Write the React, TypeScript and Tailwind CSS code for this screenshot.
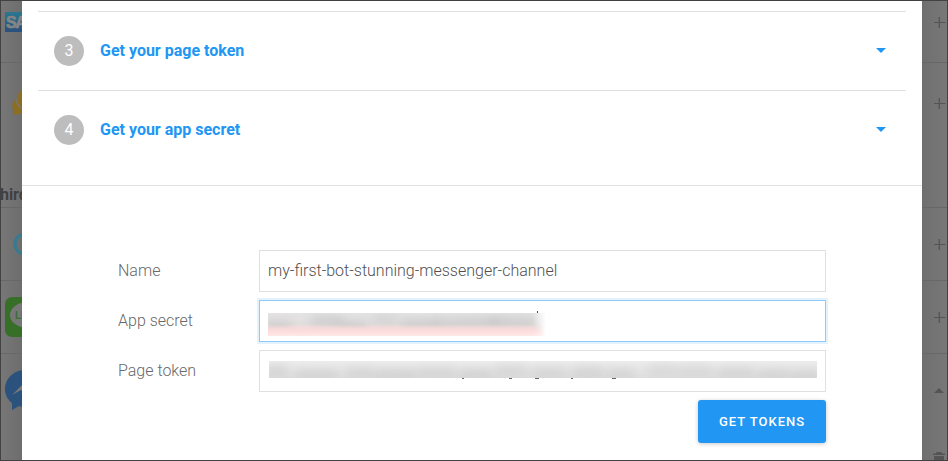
import React from "react";

const steps = [
  { number: 3, title: "Get your page token", row: "h-[79px] items-center border-t pb-px" },
  { number: 4, title: "Get your app secret", row: "h-[79px] items-center border-t pb-px" },
];

// Soft grey patches that make up the redacted values, [left, width, top, opacity].
const secretPatches = [
  [-4, 28, 8, 0.5], [42, 34, 3, 0.5], [68, 32, 8, 0.5], [104, 26, 1, 0.35], [132, 40, 6, 0.5],
  [165, 30, 5, 0.45], [192, 40, 4, 0.5], [222, 46, 4, 0.5],
];
const tokenPatches = [
  [-4, 24, 4, 0.4], [26, 44, 8, 0.35], [76, 30, 6, 0.35], [106, 42, 8, 0.4], [148, 40, 6, 0.35],
  [190, 34, 8, 0.4], [225, 34, 4, 0.35], [262, 36, 6, 0.35], [302, 34, 6, 0.4], [338, 28, 7, 0.35],
  [378, 30, 3, 0.3], [408, 36, 4, 0.3], [448, 38, 6, 0.35], [488, 34, 8, 0.35], [522, 30, 9, 0.35],
];

function Patches({ items }: { items: number[][] }) {
  return (
    <>
      {items.map(([left, width, top, opacity]) => (
        <i
          key={left}
          className="absolute h-[11px] rounded-full bg-[#bdbdbd] blur-[5px]"
          style={{ left, width, top, opacity }}
        />
      ))}
    </>
  );
}

function Plus({ className }: { className: string }) {
  return (
    <svg className={`absolute left-[11px] h-[12px] w-[13px] ${className}`} viewBox="0 0 13 12">
      <path d="M1 5.5H12.5" stroke="#545454" />
      <path d="M6.3 0V11" stroke="#555657" strokeWidth="1.4" />
    </svg>
  );
}

function LeftPage() {
  return (
    <aside className="relative w-[21px] shrink-0 overflow-hidden bg-linear-to-r from-[#777] to-[#6d6d6d]">
      <div className="relative h-[62px] border-b border-[#686868]">
        <svg className="absolute left-[4px] top-[11px]" width="40" height="20" viewBox="0 0 40 20">
          <defs>
            <linearGradient id="sap" x2="0" y2="1">
              <stop stopColor="#2a7890" />
              <stop offset="1" stopColor="#2a4f7c" />
            </linearGradient>
          </defs>
          <path d="M0 0H40L20 20H0Z" fill="url(#sap)" />
          <text x="1" y="15.5" fill="#858585" stroke="#858585" strokeWidth="0.7" letterSpacing="-1.5" fontFamily="Liberation Sans, sans-serif" fontWeight="700" fontSize="16">SAP</text>
        </svg>
      </div>
      <div className="relative h-[145px] border-b border-[#676767]">
        <svg className="absolute left-[11px] top-[27px]" width="26" height="26" viewBox="0 0 26 26">
          <path d="M4 9C-1 14 0 19 2 21L1 25L7 24C12 25 17 23 18 20C9 20 4 15 4 9Z" fill="#8c6e22" />
          <circle cx="15.5" cy="9" r="10.5" fill="#8c6e22" />
          <path d="M4.3 9C4.5 15 9 20 17 20" fill="none" stroke="#777" strokeWidth="1.2" />
        </svg>
        <h2 className="absolute -left-[11px] top-[120px] font-['Roboto',sans-serif] text-[16px] leading-[24px] font-bold text-[#404040]">Third</h2>
      </div>
      <div className="relative h-[73px] border-b border-[#686868]">
        <svg className="absolute left-[12px] top-[24px]" width="24" height="24" viewBox="0 0 24 24">
          <circle cx="12" cy="12" r="10" fill="none" stroke="#367b90" strokeWidth="3.2" />
        </svg>
      </div>
      <div className="relative h-[73px] border-b border-[#686868]">
        <svg className="absolute left-[4px] top-[16px]" width="40" height="40" viewBox="0 0 40 40">
          <rect width="40" height="40" rx="7" fill="#386f28" />
          <ellipse cx="21" cy="18" rx="16" ry="12.5" fill="#777" />
          <text x="10" y="22" fill="#386f28" fontFamily="Liberation Sans, sans-serif" fontWeight="700" fontSize="10">LINE</text>
        </svg>
      </div>
      <div className="relative h-[106px]">
        <svg className="absolute left-[4px] top-[16px]" width="40" height="40" viewBox="0 0 40 40">
          <path d="M20 0C8 0 0 9 0 19C0 25 3 30 7 33V40L14 36C27 40 40 31 40 19C40 8 31 0 20 0Z" fill="#2a527d" />
          <path d="M7 25L18 14L23 19L31 14L21 25L16 20Z" fill="#777" />
        </svg>
      </div>
    </aside>
  );
}

function RightPage() {
  return (
    <aside className="relative w-[25px] shrink-0 overflow-hidden bg-linear-to-r from-[#6f6f6f] to-[#787878]">
      <div className="relative h-[62px] border-b border-[#676767]"><Plus className="top-[16px]" /></div>
      <div className="relative h-[145px] border-b border-[#676767]"><Plus className="top-[35px]" /></div>
      <div className="relative h-[73px] border-b border-[#686868]"><Plus className="top-[31px]" /></div>
      <div className="relative h-[73px] border-b border-[#686868]"><Plus className="top-[31px]" /></div>
      <div className="relative h-[106px]">
        <svg className="absolute left-[12px] top-[34px]" width="10" height="6" viewBox="0 0 10 6"><path d="M0 5L5 0L10 5Z" fill="#545454" /></svg>
        <svg className="absolute left-[11px] top-[98px]" width="12" height="9" viewBox="0 0 12 9"><path d="M3.5 0H8.5L9 1.6H12V3H0V1.6H3ZM1 4H11V9H1Z" fill="#545454" /></svg>
      </div>
    </aside>
  );
}

const label = "w-[141px] pb-px text-[16px] leading-[24px] font-light text-[#696969]";
const field = "relative h-[42px] flex-1 border";

export default function App() {
  return (
    <div className="flex h-[461px] w-[948px] overflow-hidden border border-[#424242] bg-[#777] font-['Roboto',sans-serif]">
      <LeftPage />
      <main className="w-[900px] shrink-0 bg-white">
        <section className="h-[185px] border-b border-[#e0e0e0] px-4 pt-[10px]">
          {steps.map((step) => (
            <div key={step.number} className={`flex border-[#e0e0e0] px-4 ${step.row}`}>
              <span className="flex size-[30px] items-center justify-center rounded-full bg-[#bdbdbd] text-[16px] leading-[30px] text-white">{step.number}</span>
              <h3 className="ml-4 flex-1 text-[16px] leading-[24px] font-bold text-[#2196f3]">{step.title}</h3>
              <svg className="mr-1" width="10" height="5" viewBox="0 0 10 5"><path d="M0 0H10L5 5Z" fill="#2196f3" /></svg>
            </div>
          ))}
        </section>
        <form className="flex flex-col gap-2 pt-[64px] pr-[96px] pl-[96px]">
          <div className="flex items-center">
            <label className={label}>Name</label>
            <div className={`${field} flex items-center border-[#e0e0e0] px-2 pb-px text-[16px] font-light text-[#505050]`}>my-first-bot-stunning-messenger-channel</div>
          </div>
          <div className="flex items-center">
            <label className={label}>App secret</label>
            <div className={`${field} border-[#90caf9] pt-[12px] pl-2 shadow-[0_0_0_2px_#e3f2fd]`}>
              <div className="relative h-[23px] w-[284px] overflow-hidden">
                <div className="h-full w-[278px] bg-linear-to-b from-[#e4e4e4] via-[#e2dede] to-[#ffe5e5] mask-[linear-gradient(to_right,black_95%,transparent)]" />
                <Patches items={secretPatches} />
                <div className="absolute bottom-0 left-0 h-[12px] w-[277px] bg-linear-to-b from-[#fbd6d600] via-[#fbdada] to-[#ffe8e8] mask-[linear-gradient(to_right,black_95%,transparent)]" />
              </div>
              <i className="absolute top-[10px] left-[277px] h-[2px] w-px bg-[#444]" />
            </div>
          </div>
          <div className="flex items-center">
            <label className={label}>Page token</label>
            <div className={`${field} border-[#e0e0e0] pt-[10px] pl-[9px]`}>
              <div className="relative h-[17px] w-[548px] overflow-hidden bg-linear-to-b from-[#ededed] to-[#dedede]">
                <Patches items={tokenPatches} />
              </div>
              <i className="absolute top-[27px] left-[202px] h-px w-[2px] bg-[#666]" />
              <i className="absolute top-[27px] left-[249px] h-px w-[3px] bg-[#666]" />
              <i className="absolute top-[27px] left-[275px] h-px w-[4px] bg-[#666]" />
              <i className="absolute top-[27px] left-[311px] h-px w-[2px] bg-[#666]" />
              <i className="absolute top-[27px] left-[352px] h-px w-[4px] bg-[#666]" />
            </div>
          </div>
          <button type="button" className="h-[43px] w-[128px] self-end rounded-[3px] bg-[#2196f3] text-[13px] font-medium tracking-[1px] text-white shadow-[0_1px_4px_rgba(0,0,0,0.22)]">GET TOKENS</button>
        </form>
      </main>
      <RightPage />
    </div>
  );
}
